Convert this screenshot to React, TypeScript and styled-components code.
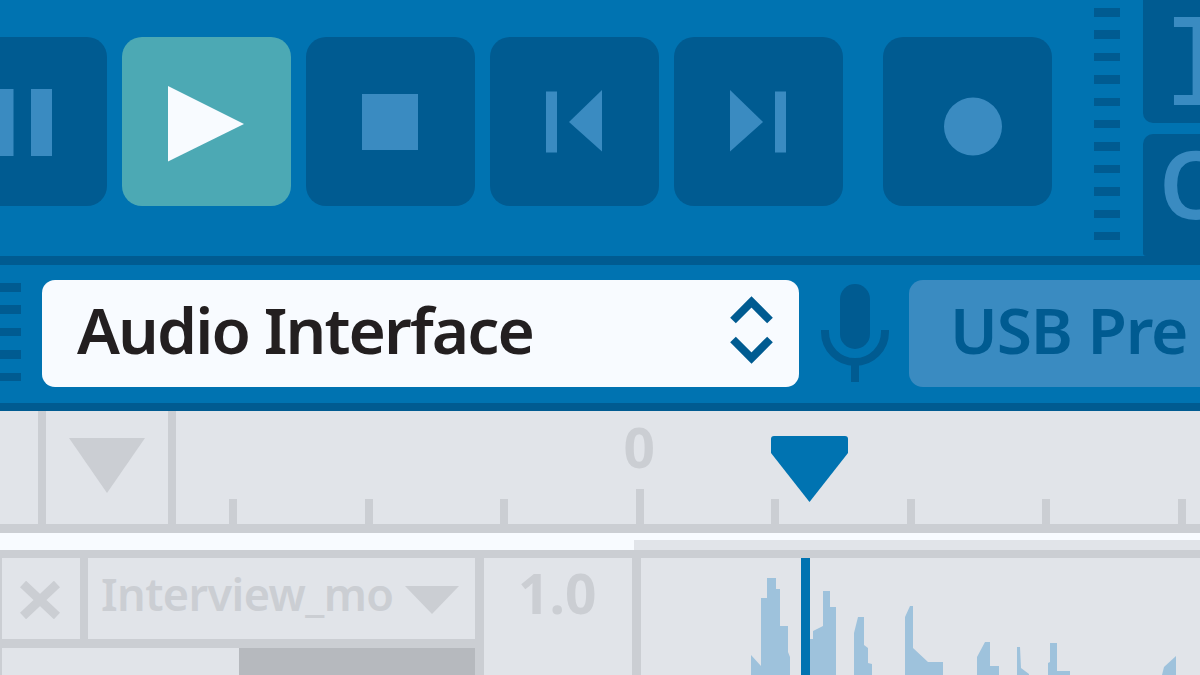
import React from 'react';
import styled, { createGlobalStyle } from 'styled-components';

const blue = '#0073b1';
const dark = '#005b91';
const light = '#3a8bc1';
const teal = '#4ca9b4';
const snow = '#f8fbff';
const gray = '#e1e4e9';
const line = '#cbced3';
const wave = '#9ec2dc';

const GlobalStyle = createGlobalStyle`
  html, body {
    margin: 0;
    padding: 0;
    background: ${gray};
  }
  body {
    font-family: 'Noto Sans', 'Open Sans', sans-serif;
  }
`;

const Page = styled.div`
  display: flex;
  flex-direction: column;
  width: 1200px;
  height: 675px;
  overflow: hidden;
`;

const TopBar = styled.div`
  display: flex;
  flex: none;
  height: 256px;
  background-color: ${blue};
`;

const Divider = styled.div<{ $size: number; $color: string }>`
  flex: none;
  height: ${(p) => p.$size}px;
  background-color: ${(p) => p.$color};
`;

const Transport = styled.div`
  display: flex;
  flex: none;
  gap: 15px;
  margin-left: -62px;
  padding-top: 37px;
`;

const TransportButton = styled.div<{ $active?: boolean; $apart?: boolean }>`
  flex: none;
  width: 169px;
  height: 169px;
  margin-left: ${(p) => (p.$apart ? 25 : 0)}px;
  border-radius: 20px;
  background-color: ${(p) => (p.$active ? teal : dark)};
  fill: ${(p) => (p.$active ? snow : light)};

  svg {
    display: block;
  }
`;

const Dashes = styled.div<{ $top: number; $width: number; $left: number }>`
  display: flex;
  flex: none;
  flex-direction: column;
  align-self: flex-start;
  gap: 13.9px;
  width: ${(p) => p.$width}px;
  margin-left: ${(p) => p.$left}px;
  padding-top: ${(p) => p.$top}px;
`;

const Dash = styled.div`
  flex: none;
  height: 8.5px;
  background-color: ${dark};
`;

const SideColumn = styled.div`
  display: flex;
  flex: none;
  flex-direction: column;
  gap: 11px;
  width: 100px;
  margin-left: 23px;
  margin-top: -20px;
`;

const SideButton = styled.div<{ $height: number; $flat?: boolean }>`
  position: relative;
  flex: none;
  height: ${(p) => p.$height}px;
  overflow: hidden;
  border-radius: ${(p) => (p.$flat ? '10px 0 0 3px' : '0 0 0 10px')};
  background-color: ${dark};
`;

const InLetter = styled.span`
  position: absolute;
  left: 19px;
  top: 12px;
  color: ${light};
  font-family: 'DejaVu Sans Mono', monospace;
  font-size: 122px;
  font-weight: 400;
  line-height: 142px;
`;

const OutLetter = styled.span`
  position: absolute;
  left: 16px;
  top: -13px;
  color: ${light};
  font-family: 'Noto Sans', sans-serif;
  font-size: 94px;
  font-weight: 600;
  line-height: 124px;
`;

const InputBar = styled.div`
  display: flex;
  flex: none;
  align-items: center;
  height: 138px;
  background-color: ${blue};
`;

const DeviceSelect = styled.div`
  display: flex;
  flex: none;
  align-items: center;
  justify-content: space-between;
  box-sizing: border-box;
  width: 757px;
  height: 107px;
  margin-left: 21px;
  margin-bottom: 2px;
  padding: 0 23px 0 35px;
  border-radius: 13px;
  background-color: ${snow};
`;

const DeviceName = styled.span`
  margin-bottom: 7px;
  color: #231f20;
  font-size: 64px;
  font-weight: 600;
  letter-spacing: -1.9px;
  line-height: 100px;
  white-space: nowrap;
`;

const Chevrons = styled.svg`
  display: block;
  flex: none;
  margin-bottom: 6px;
`;

const MicIcon = styled.svg`
  display: block;
  flex: none;
  margin-left: 16px;
  margin-bottom: 2px;
`;

const ChannelButton = styled.div`
  flex: none;
  box-sizing: border-box;
  width: 320px;
  height: 107px;
  margin-left: 14px;
  margin-bottom: 2px;
  padding-left: 41px;
  border-radius: 14px;
  background-color: ${light};
  color: ${dark};
  font-size: 64px;
  font-weight: 600;
  letter-spacing: -1.1px;
  line-height: 100px;
  white-space: nowrap;
`;

const Ruler = styled.div`
  position: relative;
  display: flex;
  flex: none;
  height: 113px;
  background-color: ${gray};
`;

const RulerRule = styled.div`
  flex: none;
  width: 8px;
  background-color: ${line};
`;

const RulerSpacer = styled.div`
  flex: none;
  width: 38px;
`;

const RulerToggle = styled.div`
  display: flex;
  flex: none;
  justify-content: center;
  box-sizing: border-box;
  width: 122px;
  padding-top: 27px;
  padding-right: 1px;
`;

const Ticks = styled.div`
  display: flex;
  flex: 1;
  align-items: flex-end;
  gap: 127.5px;
  padding-left: 53px;
`;

const Tick = styled.div<{ $major?: boolean }>`
  position: relative;
  flex: none;
  width: 8px;
  height: ${(p) => (p.$major ? 35 : 25)}px;
  background-color: ${line};
`;

const TickLabel = styled.span`
  position: absolute;
  left: -12px;
  bottom: 41px;
  color: ${line};
  font-size: 55px;
  font-weight: 700;
  line-height: 72px;
`;

const Playhead = styled.svg`
  position: absolute;
  left: 771px;
  top: 25px;
  display: block;
`;

const Band = styled.div`
  display: flex;
  flex: none;
  height: 17px;
`;

const BandFilled = styled.div`
  flex: none;
  width: 634px;
  background-color: ${snow};
`;

const BandRest = styled.div`
  flex: 1;
  border-top: 7px solid ${snow};
  background-color: ${gray};
`;

const Track = styled.div`
  display: flex;
  flex: 1;
  gap: 9px;
  min-height: 0;
  padding-left: 2px;
  background-color: ${line};
`;

const TrackHeader = styled.div`
  display: grid;
  flex: none;
  grid-template-columns: 78px 387px;
  grid-template-rows: 81px 1fr;
  column-gap: 8px;
  row-gap: 9px;
`;

const CloseCell = styled.div`
  display: flex;
  align-items: center;
  justify-content: center;
  padding-top: 2px;
  padding-right: 2px;
  background-color: ${gray};
`;

const NameCell = styled.div`
  display: flex;
  align-items: center;
  justify-content: space-between;
  padding: 0 16px 0 13px;
  background-color: ${gray};
  color: ${line};
  font-size: 45px;
  font-weight: 600;
  letter-spacing: -0.6px;
  line-height: 72px;
  white-space: nowrap;
`;

const TrackName = styled.span`
  margin-bottom: 9px;
`;

const NameArrow = styled.svg`
  display: block;
  flex: none;
  margin-top: 3px;
`;

const Meter = styled.div`
  display: flex;
  grid-column: 1 / 3;
  background-color: #b6b9be;
`;

const MeterRest = styled.div`
  flex: none;
  width: 237px;
  background-color: ${gray};
`;

const GainCell = styled.div`
  flex: none;
  width: 148px;
  box-sizing: border-box;
  padding-left: 34px;
  background-color: ${gray};
  color: ${line};
  font-size: 55px;
  font-weight: 700;
  line-height: 70px;
`;

const WaveLane = styled.div`
  position: relative;
  flex: 1;
  background-color: ${gray};

  svg {
    display: block;
  }
`;

const LaneCursor = styled.div`
  position: absolute;
  left: 160px;
  top: 0;
  bottom: 0;
  width: 9px;
  background-color: ${blue};
`;

const buttons: { id: string; active?: boolean; apart?: boolean; icon: React.ReactNode }[] = [
  {
    id: 'pause',
    icon: (
      <>
        <rect x="54" y="52" width="21.5" height="67" />
        <rect x="93" y="52" width="21" height="67" />
      </>
    ),
  },
  { id: 'play', active: true, icon: <polygon points="46,49 122,87 46,124.5" /> },
  { id: 'stop', icon: <rect x="56" y="57" width="56" height="56" /> },
  {
    id: 'prev',
    icon: (
      <>
        <rect x="56" y="54.5" width="11" height="61" />
        <polygon points="112,53 112,114.5 79,85" />
      </>
    ),
  },
  {
    id: 'next',
    icon: (
      <>
        <polygon points="56,53 56,114.5 89,85" />
        <rect x="101" y="54.5" width="11" height="61" />
      </>
    ),
  },
  { id: 'record', apart: true, icon: <circle cx="90" cy="89.5" r="29" /> },
];

const waveShapes = [
  '751,655 761,666 761,598 767,598 767,578 776,578 776,589 780,589 780,626 788,626 788,652 790,657 790,675 751,675',
  '810,639 813,639 813,631 823,626 823,591 830,591 830,607 836,607 836,675 810,675',
  '854,633 858,617 864,617 864,645 868,648 868,663 872,664 872,675 854,675',
  '905,617 910,606 913,606 913,648 928,662 943,662 943,675 905,675',
  '977,657 985,642 990,642 990,666 999,666 999,675 977,675',
  '1017,647 1020,647 1021,668 1029,674 1029,675 1017,675',
  '1048,663 1050,662 1050,643 1057,643 1057,671 1070,671 1070,675 1048,675',
  '1162,675 1164,667 1176,656 1176,675',
];

const tickCount = 8;

const App = () => {
  return (
    <Page>
      <GlobalStyle />
      <TopBar>
        <Transport>
          {buttons.map((b) => (
            <TransportButton key={b.id} $active={b.active} $apart={b.apart}>
              <svg width="169" height="169" viewBox="0 0 169 169">
                {b.icon}
              </svg>
            </TransportButton>
          ))}
        </Transport>
        <Dashes $top={8} $width={26} $left={42}>
          {Array.from({ length: 11 }, (_, i) => (
            <Dash key={i} />
          ))}
        </Dashes>
        <SideColumn>
          <SideButton $height={143}>
            <InLetter>I</InLetter>
          </SideButton>
          <SideButton $height={122} $flat>
            <OutLetter>O</OutLetter>
          </SideButton>
        </SideColumn>
      </TopBar>
      <Divider $size={9} $color={dark} />
      <InputBar>
        <Dashes $top={18} $width={21} $left={0}>
          {Array.from({ length: 5 }, (_, i) => (
            <Dash key={i} />
          ))}
        </Dashes>
        <DeviceSelect>
          <DeviceName>Audio Interface</DeviceName>
          <Chevrons width="49" height="76" viewBox="727 292 49 76">
            <path d="M733 320.5 L751.5 302 L770 320.5" fill="none" stroke={dark} strokeWidth="8" />
            <path d="M733 339.5 L751.5 358 L770 339.5" fill="none" stroke={dark} strokeWidth="8" />
          </Chevrons>
        </DeviceSelect>
        <MicIcon width="80" height="106" viewBox="815 280 80 106">
          <rect x="840" y="284" width="30" height="65" rx="15" fill={dark} />
          <path d="M825 330 v2 a30 30 0 0 0 60 0 v-2" fill="none" stroke={dark} strokeWidth="8" />
          <rect x="851" y="362" width="8" height="20" fill={dark} />
        </MicIcon>
        <ChannelButton>USB Pre</ChannelButton>
      </InputBar>
      <Divider $size={8} $color={dark} />
      <Ruler>
        <RulerSpacer />
        <RulerRule />
        <RulerToggle>
          <svg width="76" height="55" viewBox="0 0 76 55">
            <polygon points="0,0 76,0 38,55" fill={line} />
          </svg>
        </RulerToggle>
        <RulerRule />
        <Ticks>
          {Array.from({ length: tickCount }, (_, i) => (
            <Tick key={i} $major={i === 3}>
              {i === 3 && <TickLabel>0</TickLabel>}
            </Tick>
          ))}
        </Ticks>
        <Playhead width="77" height="66" viewBox="0 0 77 66">
          <path d="M3 0 H74 Q77 0 77 3 V17 L38.5 66 L0 17 V3 Q0 0 3 0 Z" fill={blue} />
        </Playhead>
      </Ruler>
      <Divider $size={9} $color={line} />
      <Band>
        <BandFilled />
        <BandRest />
      </Band>
      <Divider $size={8} $color={line} />
      <Track>
        <TrackHeader>
          <CloseCell>
            <svg width="40" height="38" viewBox="0 0 40 38">
              <path d="M3 3 L37 35 M37 3 L3 35" stroke={line} strokeWidth="9" fill="none" />
            </svg>
          </CloseCell>
          <NameCell>
            <TrackName>Interview_mo</TrackName>
            <NameArrow width="54" height="28" viewBox="0 0 54 28">
              <polygon points="0,0 54,0 27,28" fill={line} />
            </NameArrow>
          </NameCell>
          <Meter>
            <MeterRest />
          </Meter>
        </TrackHeader>
        <GainCell>1.0</GainCell>
        <WaveLane>
          <svg width="559" height="117" viewBox="641 558 559 117">
            {waveShapes.map((points) => (
              <polygon key={points} points={points} fill={wave} />
            ))}
          </svg>
          <LaneCursor />
        </WaveLane>
      </Track>
    </Page>
  );
};

export default App;
